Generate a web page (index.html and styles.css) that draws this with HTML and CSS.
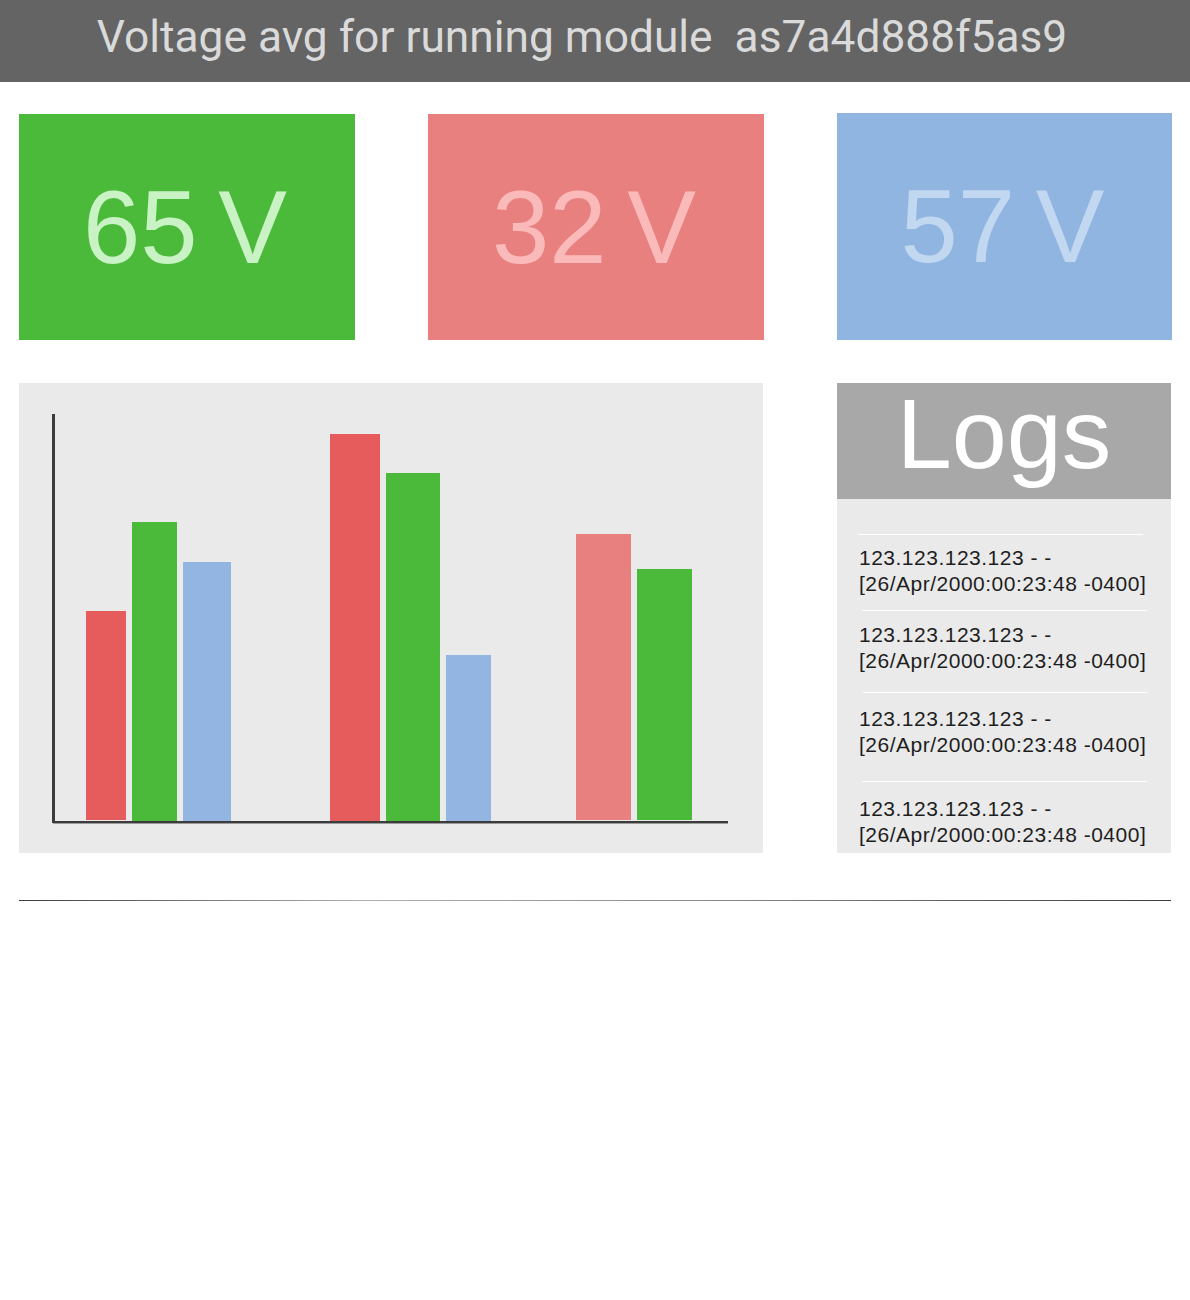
FILE: index.html
```html
<!DOCTYPE html>
<html>
<head>
<meta charset="utf-8">
<link rel="stylesheet" href="styles.css">
</head>
<body>
<header class="topbar">
  <h1 class="title">Voltage avg for running module &nbsp;as7a4d888f5as9</h1>
</header>
<main class="grid">
  <div class="card card-green"><span class="value">65 V</span></div>
  <div class="card card-red"><span class="value">32 V</span></div>
  <div class="card card-blue card-up"><span class="value">57 V</span></div>

  <section class="chart">
    <svg class="chart-svg" width="744" height="470" viewBox="0 0 744 470">
      <rect x="67" y="228" width="40" height="209" fill="#e65b5b"/>
      <rect x="113" y="139" width="45" height="302" fill="#4bba3a"/>
      <rect x="164" y="179" width="48" height="260" fill="#92b5e1"/>
      <rect x="311" y="51" width="50" height="388" fill="#e65b5b"/>
      <rect x="367" y="90" width="54" height="349" fill="#4bba3a"/>
      <rect x="427" y="272" width="45" height="169" fill="#92b5e1"/>
      <rect x="557" y="151" width="55" height="286" fill="#e88080"/>
      <rect x="618" y="186" width="55" height="251" fill="#4bba3a"/>
      <rect x="33" y="31" width="3" height="409" fill="#3c3c3c"/>
      <rect x="34" y="438" width="675" height="2" fill="#3c3c3c"/>
      <rect x="34" y="440" width="675" height="1" fill="#9a9a9a"/>
    </svg>
  </section>

  <section class="logs">
    <div class="logs-head">Logs</div>
    <ul class="log-list">
      <li class="log log-1">123.123.123.123 - -<br>[26/Apr/2000:00:23:48 -0400]</li>
      <li class="log log-2">123.123.123.123 - -<br>[26/Apr/2000:00:23:48 -0400]</li>
      <li class="log log-3">123.123.123.123 - -<br>[26/Apr/2000:00:23:48 -0400]</li>
      <li class="log log-4">123.123.123.123 - -<br>[26/Apr/2000:00:23:48 -0400]</li>
    </ul>
  </section>
</main>
<div class="rule-wrap"><div class="rule"></div></div>
</body>
</html>
```
FILE: styles.css
```css
html, body {
  margin: 0;
  padding: 0;
  background: #ffffff;
  font-family: "Liberation Sans", Arial, sans-serif;
}

.topbar {
  height: 82px;
  background: #646464;
  display: flex;
  align-items: flex-start;
  justify-content: center;
}

.title {
  margin: 0;
  font-family: Roboto, "Liberation Sans", Arial, sans-serif;
  font-weight: 400;
  font-size: 44.3px;
  line-height: 74px;
  color: #dadada;
  padding-right: 26px;
  white-space: nowrap;
}

.grid {
  display: grid;
  grid-template-columns: 336px 336px 336px;
  column-gap: 73px;
  row-gap: 43px;
  padding: 32px 17px 0 19px;
}

.card {
  height: 226px;
  display: flex;
  align-items: center;
  justify-content: center;
}

.card-up {
  margin-top: -1px;
  height: 227px;
  margin-right: 1px;
}

.value {
  font-size: 103px;
  line-height: 103px;
  word-spacing: -8px;
  margin-right: 4px;
}

.card-green { background: #4bba3a; }
.card-green .value { color: #c9f2c5; }
.card-red { background: #e88080; }
.card-red .value { color: #fbbaba; }
.card-blue { background: #91b5e1; }
.card-blue .value { color: #c2d7f0; }

.chart {
  grid-column: span 2;
  height: 470px;
  margin-right: 1px;
  background: #eaeaea;
}

.chart-svg {
  display: block;
}

.logs {
  height: 470px;
  background: #eaeaea;
  margin-right: 2px;
}

.logs-head {
  height: 116px;
  background: #a8a8a8;
  color: #ffffff;
  font-size: 99px;
  line-height: 102px;
  text-align: center;
}

.log-list {
  list-style: none;
  margin: 0;
  padding: 35px 0 0 0;
  height: 319px;
  overflow: hidden;
}

.log {
  margin-left: 22px;
  font-size: 21px;
  letter-spacing: 0.5px;
  line-height: 26px;
  color: #1e1e1e;
  white-space: nowrap;
}

.log::before {
  content: "";
  display: block;
  width: 285px;
  height: 1px;
  background: #ffffff;
}

.log-1::before { margin: 0 0 10px -1px; }
.log-2::before { margin: 13px 0 11px 3px; }
.log-3::before { margin: 18px 0 13px 4px; }
.log-4::before { margin: 23px 0 14px 3px; }

.rule-wrap {
  padding: 47px 19px 0 19px;
}

.rule {
  height: 1px;
  background: linear-gradient(to right, #3c3c3c, #b0b0b0 30%, #8a8a8a 60%, #3c3c3c);
}
```
